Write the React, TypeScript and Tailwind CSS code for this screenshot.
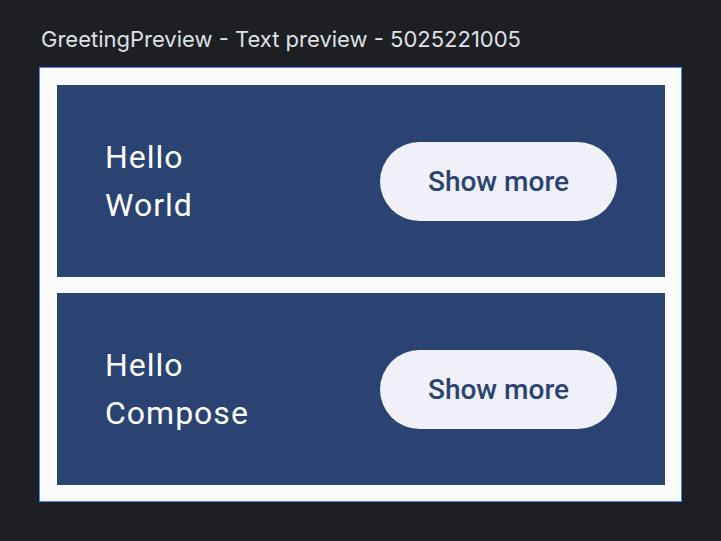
import React from "react";

function Card({ name }: { name: string }) {
  return (
    <div className="flex h-[192px] items-center justify-between bg-[#2b4373] pl-[48px] pr-[48px]">
      <div
        className="flex flex-col text-[32px] leading-[48px] tracking-[1px] text-white"
        style={{ fontFamily: "Roboto, sans-serif" }}
      >
        <span>Hello</span>
        <span>{name}</span>
      </div>
      <button
        className="flex h-[79px] w-[237px] items-center justify-center rounded-full bg-[#eff0f8] pt-[1px] text-[28px] font-medium tracking-[0px] text-[#2b4373]"
        style={{ fontFamily: "Roboto, sans-serif" }}
      >
        Show more
      </button>
    </div>
  );
}

export default function App() {
  return (
    <div className="h-[541px] w-[721px] bg-[#1e1f22] pl-[39px] pt-[25px]">
      <div
        className="h-[29px] pl-[2px] text-[22px] leading-[29px] text-[#dfe1e5]"
        style={{ fontFamily: "Inter, sans-serif" }}
      >
        GreetingPreview - Text preview - 5025221005
      </div>
      <div className="mt-[13px] w-[643px] bg-[#4f86f7] p-[1px]">
        <div className="flex flex-col gap-[16px] bg-[#fafafa] pb-[16px] pl-[17px] pr-[16px] pt-[17px]">
          <Card name="World" />
          <Card name="Compose" />
        </div>
      </div>
    </div>
  );
}
